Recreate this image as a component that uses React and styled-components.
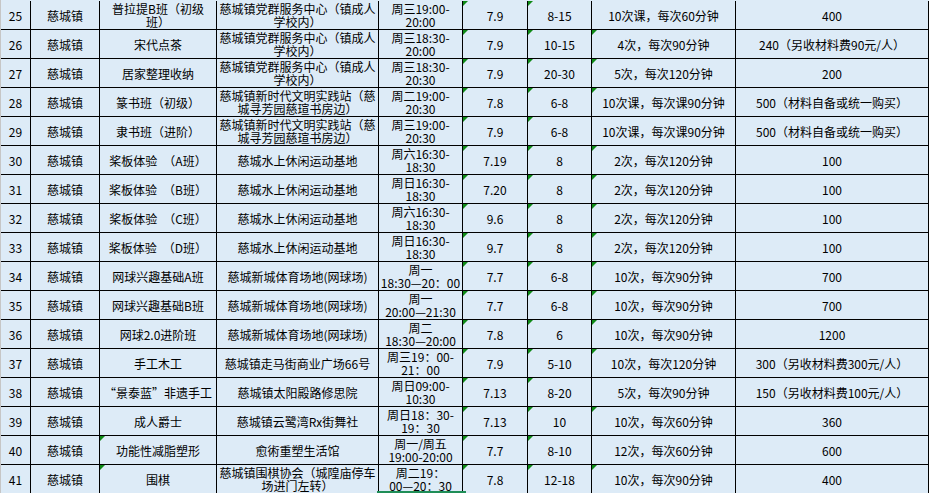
import React from 'react';
import styled, { createGlobalStyle } from 'styled-components';

const GlobalStyle = createGlobalStyle`
  html, body {
    margin: 0;
    padding: 0;
    overflow: hidden;
    background: #ddebf7;
  }
  body {
    font-family: "Noto Sans CJK SC", "Noto Sans", sans-serif;
    font-size: 12px;
    color: #000;
  }
`;

const Sheet = styled.div`
  position: relative;
  width: 929px;
  height: 493px;
  box-sizing: border-box;
  padding-top: 1px;
  border-left: 1px solid #c6c6c6;
  background: #ddebf7;
  overflow: hidden;
`;

const Row = styled.div`
  display: grid;
  grid-template-columns: 30px 69px 117px 162px 84px 65px 64px 144px 193px;
  height: 29px;
  box-sizing: border-box;
  border-bottom: 1px solid #000;
`;

const Cell = styled.div`
  position: relative;
  display: flex;
  align-items: center;
  justify-content: center;
  text-align: center;
  box-sizing: border-box;
  border-right: 1px solid #000;
  line-height: 13px;
  white-space: nowrap;
  overflow: hidden;

  &::before {
    content: "";
    display: ${({ $flag }) => ($flag ? 'block' : 'none')};
    position: absolute;
    left: 0;
    top: 0;
    width: 0;
    height: 0;
    border-top: 5px solid #0f8a16;
    border-right: 5px solid transparent;
  }
`;

const Lines = styled.span`
  display: flex;
  flex-direction: column;
  align-items: center;
`;

const Selection = styled.div`
  position: absolute;
  left: 376px;
  top: 491px;
  width: 89px;
  height: 2px;
  background: #1f8e57;
`;

const place1 = '慈城镇党群服务中心（镇成人\n学校内）';
const place2 = '慈城镇新时代文明实践站（慈\n城寻芳园慈瑄书房边）';
const water = '慈城水上休闲运动基地';
const tennis = '慈城新城体育场地(网球场)';

// [no, town, course, place, time, date, age, sessions, fee, flags]
// flags: c = course column, s = sessions column
const rows = [
  [25, '慈城镇', '普拉提B班（初级\n班）', place1, '周三19:00-\n20:00', '7.9', '8-15', '10次课，每次60分钟', '400', ''],
  [26, '慈城镇', '宋代点茶', place1, '周三18:30-\n20:00', '7.9', '10-15', '4次，每次90分钟', '240（另收材料费90元/人）', 's'],
  [27, '慈城镇', '居家整理收纳', place1, '周三18:30-\n20:30', '7.9', '20-30', '5次，每次120分钟', '200', 's'],
  [28, '慈城镇', '篆书班（初级）', place2, '周二19:00-\n20:30', '7.8', '6-8', '10次课，每次课90分钟', '500（材料自备或统一购买）', 's'],
  [29, '慈城镇', '隶书班（进阶）', place2, '周三19:00-\n20:30', '7.9', '6-8', '10次课，每次课90分钟', '500（材料自备或统一购买）', ''],
  [30, '慈城镇', '桨板体验　（A班）', water, '周六16:30-\n18:30', '7.19', '8', '2次，每次120分钟', '100', 's'],
  [31, '慈城镇', '桨板体验　（B班）', water, '周日16:30-\n18:30', '7.20', '8', '2次，每次120分钟', '100', 's'],
  [32, '慈城镇', '桨板体验　（C班）', water, '周六16:30-\n18:30', '9.6', '8', '2次，每次120分钟', '100', 's'],
  [33, '慈城镇', '桨板体验　（D班）', water, '周日16:30-\n18:30', '9.7', '8', '2次，每次120分钟', '100', 's'],
  [34, '慈城镇', '网球兴趣基础A班', tennis, '周一\n18:30—20：00', '7.7', '6-8', '10次，每次90分钟', '700', 's'],
  [35, '慈城镇', '网球兴趣基础B班', tennis, '周一\n20:00—21:30', '7.7', '6-8', '10次，每次90分钟', '700', 's'],
  [36, '慈城镇', '网球2.0进阶班', tennis, '周二\n18:30—20:00', '7.8', '6', '10次，每次90分钟', '1200', 's'],
  [37, '慈城镇', '手工木工', '慈城镇走马街商业广场66号', '周三19：00-\n21：00', '7.9', '5-10', '10次，每次120分钟', '300（另收材料费300元/人）', 's'],
  [38, '慈城镇', '“景泰蓝”非遗手工', '慈城镇太阳殿路修思院', '周日09:00-\n10:30', '7.13', '8-20', '5次，每次90分钟', '150（另收材料费100元/人）', ''],
  [39, '慈城镇', '成人爵士', '慈城镇云鹭湾Rx街舞社', '周日18：30-\n19：30', '7.13', '10', '10次，每次60分钟', '360', 's'],
  [40, '慈城镇', '功能性减脂塑形', '愈術重塑生活馆', '周一/周五\n19:00-20:00', '7.7', '8-10', '12次，每次60分钟', '600', 'c'],
  [41, '慈城镇', '围棋', '慈城镇围棋协会（城隍庙停车\n场进门左转）', '周二19：\n00—20：30', '7.8', '12-18', '10次，每次90分钟', '400', 'cs'],
];

const Text = ({ value }) => {
  const parts = String(value).split('\n');
  if (parts.length === 1) return <span>{parts[0]}</span>;
  return (
    <Lines>
      {parts.map((p, i) => (
        <span key={i}>{p}</span>
      ))}
    </Lines>
  );
};

const App = () => {
  return (
    <>
      <GlobalStyle />
      <Sheet>
        {rows.map((r) => {
          const [no, town, course, place, time, date, age, sessions, fee, flags] = r;
          return (
            <Row key={no}>
              <Cell>{no}</Cell>
              <Cell>{town}</Cell>
              <Cell $flag={flags.includes('c')}><Text value={course} /></Cell>
              <Cell><Text value={place} /></Cell>
              <Cell><Text value={time} /></Cell>
              <Cell $flag>{date}</Cell>
              <Cell $flag>{age}</Cell>
              <Cell $flag={flags.includes('s')}>{sessions}</Cell>
              <Cell>{fee}</Cell>
            </Row>
          );
        })}
        <Selection />
      </Sheet>
    </>
  );
};

export default App;
